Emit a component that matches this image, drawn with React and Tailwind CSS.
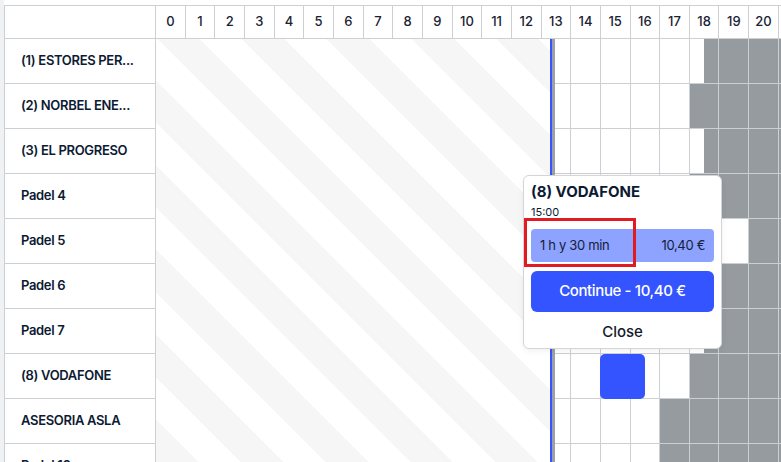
import React from 'react'

const HOUR_W = 29.667
const HOURS = Array.from({ length: 24 }, (_, i) => i)

const FULL = 'bg-[#969ba0]'
const HALF = 'bg-[linear-gradient(to_right,transparent_50%,#969ba0_50%)]'

const courts = [
  { name: '(1) ESTORES PER...', from: 18.5 },
  { name: '(2) NORBEL ENE...', from: 18 },
  { name: '(3) EL PROGRESO', from: 18.5 },
  { name: 'Padel 4', from: 18 },
  { name: 'Padel 5', from: 18.5, free: [19] },
  { name: 'Padel 6', from: 18 },
  { name: 'Padel 7', from: 18.5 },
  { name: '(8) VODAFONE', from: 18, booking: { start: 15, dur: 1.5 } },
  { name: 'ASESORIA ASLA', from: 17 },
  { name: 'Padel 10', from: 17 },
]

function cellFill(court, h) {
  if (court.free && court.free.includes(h)) return ''
  if (h >= court.from) return FULL
  if (h + 0.5 === court.from) return HALF
  return ''
}

function Popup() {
  return (
    <div className="absolute left-[523px] top-[175px] w-[199px] rounded-md border border-[#d3d5d8] bg-white px-[7px] pt-[6px] pb-[6px] shadow-[0_2px_6px_rgba(15,23,42,0.06)]">
      <p className="text-[15px] font-bold leading-[20px] text-[#0c1a33]">(8) VODAFONE</p>
      <p className="mt-[3px] text-[11px] leading-[14px] text-[#0c1a33]">15:00</p>
      <div className="mt-[10px] flex h-[33px] items-center justify-between rounded-[4px] bg-[#8ea3ff] px-[9px] text-[13px] tracking-tight text-[#14203a]">
        <span>1 h y 30 min</span>
        <span>10,40 €</span>
      </div>
      <button
        type="button"
        className="mt-[9px] flex h-[41px] w-full items-center justify-center rounded-md bg-[#3354ff] text-[15px] font-medium tracking-tight text-white"
      >
        Continue - 10,40 €
      </button>
      <p className="mt-[10px] text-center text-[15px] font-medium leading-[20px] text-[#14192a]">Close</p>
    </div>
  )
}

export default function App() {
  return (
    <div className="relative flex h-[462px] w-[781px] items-start overflow-hidden bg-white font-['Inter',sans-serif]">
      <div className="h-full w-[4px] shrink-0 bg-[#f0f1f3]" />

      <div className="mt-[5px] flex shrink-0 border-t border-l border-[#cdd0d3]">
        {/* court names */}
        <div className="w-[151px] shrink-0 border-r border-[#cdd0d3]">
          <div className="h-[33px] border-b border-[#cdd0d3]" />
          {courts.map((c) => (
            <div
              key={c.name}
              className="flex h-[45px] items-center border-b border-[#cdd0d3] pl-[16px] text-[13px] font-semibold tracking-tight text-[#0c1a33]"
            >
              {c.name}
            </div>
          ))}
        </div>

        {/* timeline */}
        <div className="flex flex-col">
          <div className="flex h-[33px] shrink-0">
            {HOURS.map((h) => (
              <div
                key={h}
                style={{ width: HOUR_W }}
                className="flex shrink-0 items-center justify-center border-r border-b border-[#cdd0d3] text-[13px] font-medium text-[#1a2233]"
              >
                {h}
              </div>
            ))}
          </div>

          <div className="relative shrink-0">
            {courts.map((c) => (
              <div key={c.name} className="relative flex h-[45px]">
                {HOURS.map((h) => (
                  <div
                    key={h}
                    style={{ width: HOUR_W }}
                    className={`shrink-0 border-r border-b border-[#cdd0d3] ${cellFill(c, h)}`}
                  />
                ))}
                {c.booking && (
                  <div
                    className="absolute top-0 h-[45px] rounded-[5px] bg-[#3354ff]"
                    style={{ left: c.booking.start * HOUR_W - 1, width: c.booking.dur * HOUR_W }}
                  />
                )}
              </div>
            ))}

            {/* past hours */}
            <div className="absolute top-0 bottom-0 left-0 w-[394px] bg-[repeating-linear-gradient(45deg,#ffffff_0_19px,#f6f6f7_19px_49px,#ffffff_49px_60px)]" />
            <div className="absolute top-0 bottom-0 left-[394px] w-[2px] bg-[#3354ff]" />
            <div className="absolute top-0 bottom-0 left-[396px] w-[3px] bg-[#9ca0a6]" />
          </div>
        </div>
      </div>

      <Popup />
      <div className="absolute left-[524px] top-[218px] h-[49px] w-[112px] border-[3px] border-[#e01b22]" />
    </div>
  )
}
